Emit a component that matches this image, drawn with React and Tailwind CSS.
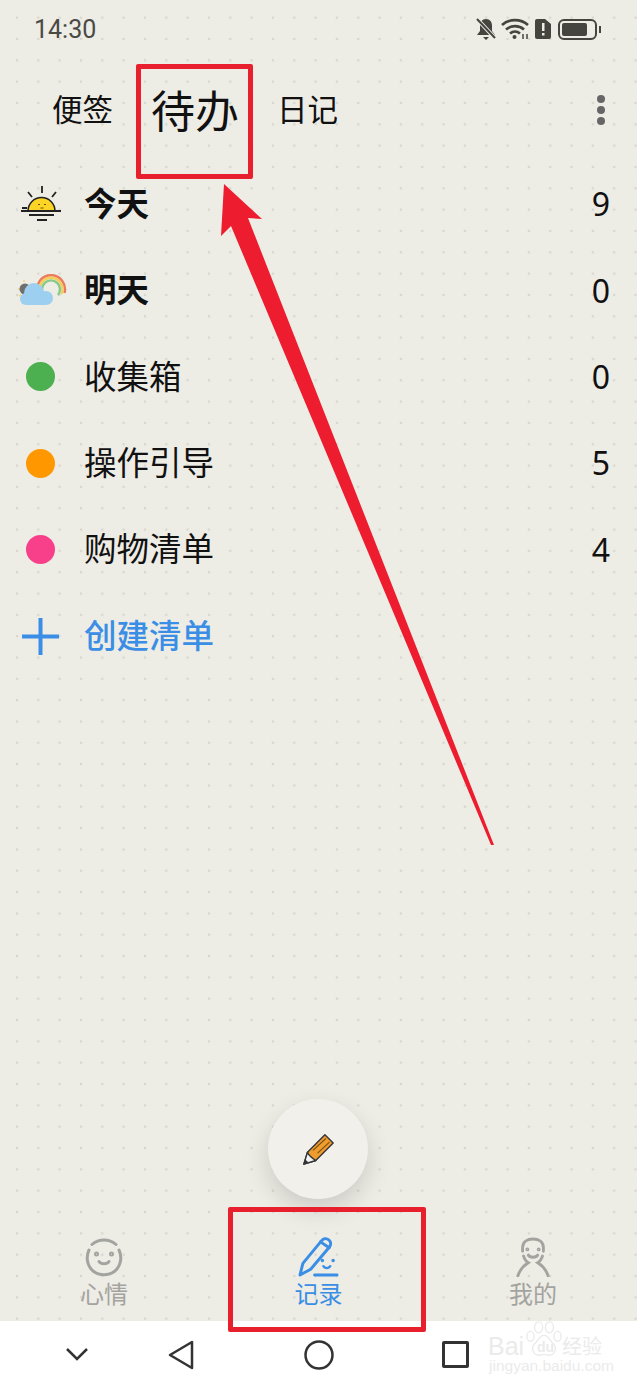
import React from 'react';

const lists = [
    { name: '收集箱', count: 0, color: 'bg-[#4caf50]' },
    { name: '操作引导', count: 5, color: 'bg-[#ff9800]' },
    { name: '购物清单', count: 4, color: 'bg-[#f8408a]' },
];

const SunIcon = () => (
    <svg width="44" height="38" viewBox="0 0 44 38" fill="none">
        <path d="M9 26a13.500 13.500 0 0 1 27 0z" fill="#fbd426" stroke="#222" strokeWidth="1.500" />
        <path d="M23 1v7M9 7l4 5M37 7l-4 5M2 26h40M3 23h5M10 30h25M18 35h10" stroke="#222" strokeWidth="1.800" />
        <path d="M19 20l1-1 1 1M25 20l1-1 1 1M21.500 23h3" stroke="#6b5200" strokeWidth="1" />
    </svg>
);

const RainbowIcon = () => (
    <svg width="50" height="34" viewBox="0 0 50 34" fill="none">
        <path d="M20.500 19a14 14 0 1 1 27 0" stroke="#ec7a5c" strokeWidth="2.400" />
        <path d="M23.500 20a11.500 11.500 0 1 1 21 0" stroke="#f4cf58" strokeWidth="2.400" />
        <path d="M27 21a9 9 0 1 1 14 0" stroke="#86c98a" strokeWidth="2.400" />
        <path d="M1 15h2M7 6v2M2 22l2-1" stroke="#f2d479" strokeWidth="1.500" />
        <circle cx="8" cy="15" r="5.500" fill="#6f6f6f" />
        <g fill="#9ccff0">
            <circle cx="9" cy="25" r="6" />
            <circle cx="17" cy="19" r="10" />
            <circle cx="29" cy="24" r="7" />
            <rect x="9" y="24" width="20" height="7" />
        </g>
    </svg>
);

const PencilIcon = () => (
    <svg width="33" height="33" viewBox="0 0 36 36" fill="none">
        <path d="M2 34l4-13L25 2l9 9-19 19z" fill="#ee9d2c" stroke="#33333a" strokeWidth="1.500" strokeLinejoin="round" />
        <path d="M2 34l4-13c1 3 6 7 9 9z" fill="#f5f4ef" stroke="#33333a" strokeWidth="1.500" strokeLinejoin="round" />
        <path d="M2 34l1.500-5 3.500 3z" fill="#33333a" />
        <path d="M12 19L26 6M17 22L30 10" stroke="#7a4c12" strokeWidth="1.200" />
    </svg>
);

const MoodIcon = () => (
    <svg width="40" height="40" viewBox="0 0 40 40" fill="none" stroke="#a3a3a0" strokeWidth="3" strokeLinecap="round">
        <path d="M8 7.500a18 18 0 0 1 24 0M35 13a18 18 0 0 1-4 21 18 18 0 0 1-22 0 18 18 0 0 1-4-21" />
        <path d="M15 24.500c2 3 8 3 10 0" />
        <circle cx="12.500" cy="17" r="1" />
        <circle cx="27.500" cy="17" r="1" />
    </svg>
);

const RecordIcon = () => (
    <svg width="41" height="41" viewBox="0 0 42 42" fill="none" stroke="#3a8ee6" strokeWidth="3" strokeLinecap="round" strokeLinejoin="round">
        <path d="M2 39l3-12L24 4c2-2.500 5-3 7.500-1s2.500 5 .5 7.500L13 33z" />
        <path d="M23 5l9 6" />
        <path d="M17 39h23" />
        <path d="M26 30c2 2.500 5 2.500 7 0" strokeWidth="2.500" />
        <circle cx="25" cy="24" r="0.800" strokeWidth="2" />
        <circle cx="36" cy="24" r="0.800" strokeWidth="2" />
    </svg>
);

const MineIcon = () => (
    <svg width="36" height="40" viewBox="0 0 38 42" fill="none" stroke="#a3a3a0" strokeWidth="3" strokeLinecap="round">
        <path d="M8 15V11C8 5 13 2 19 2s11 3 11 9v4" />
        <path d="M9 20c1 3 3 6 5 7-5 3-9 8-11 14" />
        <path d="M29 20c-1 3-3 6-5 7 5 3 9 8 11 14" />
        <path d="M14 19c2 3 8 3 10 0" />
        <circle cx="13" cy="13" r="0.800" strokeWidth="2.500" />
        <circle cx="25" cy="13" r="0.800" strokeWidth="2.500" />
    </svg>
);

const StatusIcons = () => (
    <div className="flex items-center">
        {/* bell off */}
        <svg width="20" height="22" viewBox="0 0 20 22">
            <path d="M10 1c4 0 6 3 6 7v5l3 4H1l3-4V8c0-4 2-7 6-7z" fill="#45453f" />
            <path d="M7 19h6l-3 3z" fill="#45453f" />
            <path d="M1 1l18 19" stroke="#edece5" strokeWidth="4" />
            <path d="M1 1l18 19" stroke="#45453f" strokeWidth="2" />
        </svg>
        <svg width="28" height="22" viewBox="0 0 28 22" fill="none" className="ml-[5px]" stroke="#45453f" strokeWidth="2.600">
            <path d="M1 7c7-6.500 19-6.500 26 0" />
            <path d="M5 11.500c5-4.500 13-4.500 18 0" />
            <path d="M9 15.500c3-2.500 7-2.500 10 0" />
            <circle cx="13.500" cy="19" r="2" fill="#45453f" stroke="none" />
            <path d="M22 16v5M26 16v5" strokeWidth="1.500" />
        </svg>
        <svg width="16" height="20" viewBox="0 0 16 20" className="ml-[6px]">
            <path d="M2 0h8l6 5v13a2 2 0 0 1-2 2H2a2 2 0 0 1-2-2V2a2 2 0 0 1 2-2z" fill="#45453f" />
            <path d="M7 4h2.500v8H7zM7 14h2.500v2.500H7z" fill="#edece5" />
        </svg>
        <div className="ml-[7px] flex items-center">
            <div className="flex h-[21px] w-[39px] items-center rounded-[6px] border-2 border-[#45453f] px-[2px]">
                <div className="h-[13px] w-[25px] rounded-[2px] bg-[#45453f]" />
            </div>
            <div className="ml-[2px] h-[7px] w-[2px] bg-[#45453f]" />
        </div>
    </div>
);

const Paw = () => (
    <svg width="36" height="40" viewBox="0 0 40 40" fill="none" stroke="#ebebeb" strokeWidth="1.500">
        <ellipse cx="14" cy="7" rx="4.500" ry="6" />
        <ellipse cx="26" cy="7" rx="4.500" ry="6" />
        <ellipse cx="5" cy="17" rx="4" ry="5.500" />
        <ellipse cx="35" cy="17" rx="4" ry="5.500" />
        <path d="M20 16c6 0 6 6 11 10 4 5 0 12-5 12-3 0-4-1-6-1s-3 1-6 1c-5 0-9-7-5-12 5-4 5-10 11-10z" />
    </svg>
);

const TabItem = ({ icon, label, active }) => (
    <div className="flex w-[100px] flex-col items-center">
        <div className="flex h-[42px] items-start">{icon}</div>
        <span className={`text-[24px] leading-[28px] ${active ? 'text-[#3a8ee6]' : 'text-[#a3a3a0]'}`}>{label}</span>
    </div>
);

export default function App() {
    return (
        <div className="relative flex h-[1388px] w-[637px] flex-col overflow-hidden bg-[#edece5] bg-[radial-gradient(circle,#d8d7cf_1.200px,transparent_1.600px)] bg-[size:21.33px_21.33px] bg-[position:6.33px_7px] font-['Noto_Sans_CJK_SC','Noto_Sans',sans-serif] text-[#111]">
            <div className="flex h-[58px] shrink-0 items-center justify-between pl-[34px] pr-[36px]">
                <span className="pt-[1px] font-['Roboto',sans-serif] text-[25px] text-[#4a4a45]">14:30</span>
                <StatusIcons />
            </div>

            <div className="flex h-[103px] shrink-0 items-center justify-between pl-[52px] pr-[32px]">
                <div className="flex items-center gap-[38px] pb-[2px]">
                    <span className="text-[30.500px] leading-none">便签</span>
                    <span className="text-[44px] leading-none">待办</span>
                    <span className="text-[30.500px] leading-none">日记</span>
                </div>
                <div className="flex flex-col gap-[3px]">
                    <div className="h-[8px] w-[8px] rounded-full bg-[#666]" />
                    <div className="h-[8px] w-[8px] rounded-full bg-[#666]" />
                    <div className="h-[8px] w-[8px] rounded-full bg-[#666]" />
                </div>
            </div>

            <div className="flex flex-col text-[32.500px]">
                <div className="flex h-[86.4px] items-center pr-[27px]">
                    <div className="flex w-[84px] justify-center pr-[2px]"><SunIcon /></div>
                    <span className="flex-1 pb-[4px] font-bold">今天</span>
                    <span className="font-['Noto_Sans',sans-serif] text-[32px]">9</span>
                </div>
                <div className="flex h-[86.4px] items-center pr-[27px]">
                    <div className="flex w-[84px] justify-center"><RainbowIcon /></div>
                    <span className="flex-1 pb-[4px] font-bold">明天</span>
                    <span className="font-['Noto_Sans',sans-serif] text-[32px]">0</span>
                </div>
                {lists.map((item) => (
                    <div key={item.name} className="flex h-[86.4px] items-center pr-[27px]">
                        <div className="w-[84px] pl-[26px]">
                            <div className={`h-[29px] w-[29px] rounded-full ${item.color}`} />
                        </div>
                        <span className="flex-1 pb-[4px]">{item.name}</span>
                        <span className="font-['Noto_Sans',sans-serif] text-[32px]">{item.count}</span>
                    </div>
                ))}
                <div className="flex h-[86.4px] items-center">
                    <div className="w-[84px] pl-[22px]">
                        <svg width="37" height="37" viewBox="0 0 37 37" stroke="#3a8ee6" strokeWidth="4">
                            <path d="M0 18.500h37M18.500 0v37" />
                        </svg>
                    </div>
                    <span className="pb-[4px] font-medium text-[#3a8ee6]">创建清单</span>
                </div>
            </div>

            <div className="mt-auto flex h-[84px] shrink-0 gap-[114.500px] pl-[54px]">
                <TabItem icon={<MoodIcon />} label="心情" />
                <TabItem icon={<RecordIcon />} label="记录" active />
                <TabItem icon={<MineIcon />} label="我的" />
            </div>

            <div className="flex h-[67px] shrink-0 items-center bg-white pl-[66px]">
                <svg width="22" height="13" viewBox="0 0 22 13" fill="none" stroke="#333" strokeWidth="2.500">
                    <path d="M1 1l10 10L21 1" />
                </svg>
                <svg width="26" height="30" viewBox="0 0 26 30" fill="none" stroke="#333" strokeWidth="2.500" strokeLinejoin="round" className="ml-[80px]">
                    <path d="M24 2v26L2 15z" />
                </svg>
                <svg width="30" height="30" viewBox="0 0 30 30" fill="none" stroke="#333" strokeWidth="2.500" className="ml-[110px]">
                    <circle cx="15" cy="15" r="13.500" />
                </svg>
                <div className="ml-[108px] h-[27px] w-[27px] rounded-[2px] border-[3px] border-[#333]" />
            </div>

            {/* floating button */}
            <div className="absolute left-[268px] top-[1099px] flex h-[100px] w-[100px] items-center justify-center rounded-full bg-[#f1f0eb] shadow-[0_10px_24px_rgba(0,0,0,0.14)]">
                <PencilIcon />
            </div>

            {/* red annotations */}
            <div className="absolute left-[136px] top-[64px] h-[115px] w-[117px] rounded-[2px] border-[5px] border-[#e8202e]" />
            <div className="absolute left-[228px] top-[1207px] h-[125px] w-[198px] rounded-[2px] border-[5px] border-[#e8202e]" />
            <svg className="absolute left-0 top-0" width="637" height="860" viewBox="0 0 637 860">
                <path d="M224 184L262 219 248 218 494 845 491 845 231 226 221 236z" fill="#ed1c2e" />
            </svg>

            {/* watermark */}
            <div className="absolute left-[488px] top-[1319px] h-[66px] w-[118px] text-[#ebebeb]">
                <div className="absolute left-[38px] top-0"><Paw /></div>
                <span className="absolute left-0 top-[17px] font-['Liberation_Sans',sans-serif] text-[25px] leading-[20px]">Bai</span>
                <span className="absolute left-[49px] top-[20px] font-['Liberation_Sans',sans-serif] text-[14px] font-bold leading-[16px]">du</span>
                <span className="absolute left-[74px] top-[16px] text-[20px] leading-[22px]">经验</span>
                <span className="absolute left-[1px] top-[39px] font-['Liberation_Sans',sans-serif] text-[15.500px] leading-[16px]">jingyan.baidu.com</span>
            </div>
        </div>
    );
}
